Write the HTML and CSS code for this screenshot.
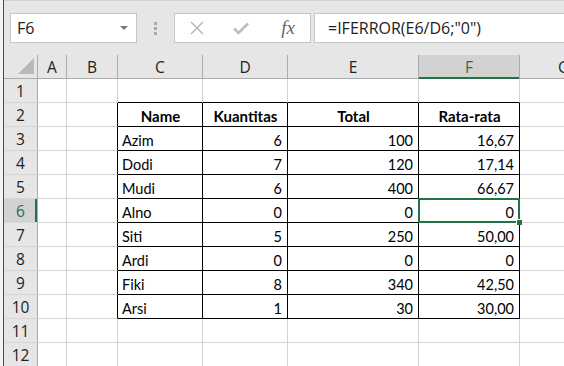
FILE: index.html
```html
<!DOCTYPE html>
<html lang="id">
<head>
    <meta charset="UTF-8">
    <meta name="viewport" content="width=device-width, initial-scale=1.0">
    <title>Rata-rata</title>
    <link rel="stylesheet" href="styles.css">
</head>
<body>
    <div class="app">
        <div class="topline"></div>

        <div class="formula-bar">
            <div class="namebox">
                <span>F6</span>
                <span class="caret"></span>
            </div>
            <div class="grip"><i></i><i></i><i></i></div>
            <div class="fx-buttons">
                <span class="btn">
                    <svg width="16" height="16" viewBox="0 0 16 16"><path d="M2 2 L14 14 M14 2 L2 14" stroke="#b4b4b4" stroke-width="1.4" fill="none"/></svg>
                </span>
                <span class="btn">
                    <svg width="18" height="16" viewBox="0 0 18 16"><path d="M2 8.5 L6.5 13 L16 3.5" stroke="#bdbdbd" stroke-width="2.6" fill="none"/></svg>
                </span>
                <span class="btn fx">fx</span>
            </div>
            <div class="formula">=IFERROR(E6/D6;"0")</div>
        </div>

        <div class="sheet">
            <!-- column headers -->
            <div class="ch corner"><span class="tri"></span></div>
            <div class="ch">A</div>
            <div class="ch">B</div>
            <div class="ch">C</div>
            <div class="ch">D</div>
            <div class="ch">E</div>
            <div class="ch active">F</div>
            <div class="ch last">G</div>

            <!-- row 1 -->
            <div class="rh">1</div>
            <div class="cell"></div><div class="cell"></div>
            <div class="cell eb"></div><div class="cell eb"></div><div class="cell eb"></div><div class="cell eb"></div>
            <div class="cell"></div>

            <!-- row 2 -->
            <div class="rh">2</div>
            <div class="cell"></div><div class="cell er"></div>
            <div class="cell tb th">Name</div>
            <div class="cell tb th">Kuantitas</div>
            <div class="cell tb th">Total</div>
            <div class="cell tb th">Rata-rata</div>
            <div class="cell"></div>

            <!-- row 3 -->
            <div class="rh">3</div>
            <div class="cell"></div><div class="cell er"></div>
            <div class="cell tb">Azim</div>
            <div class="cell tb num">6</div>
            <div class="cell tb num">100</div>
            <div class="cell tb num">16,67</div>
            <div class="cell"></div>

            <!-- row 4 -->
            <div class="rh">4</div>
            <div class="cell"></div><div class="cell er"></div>
            <div class="cell tb">Dodi</div>
            <div class="cell tb num">7</div>
            <div class="cell tb num">120</div>
            <div class="cell tb num">17,14</div>
            <div class="cell"></div>

            <!-- row 5 -->
            <div class="rh">5</div>
            <div class="cell"></div><div class="cell er"></div>
            <div class="cell tb">Mudi</div>
            <div class="cell tb num">6</div>
            <div class="cell tb num">400</div>
            <div class="cell tb num">66,67</div>
            <div class="cell"></div>

            <!-- row 6 -->
            <div class="rh active">6</div>
            <div class="cell"></div><div class="cell er"></div>
            <div class="cell tb">Alno</div>
            <div class="cell tb num">0</div>
            <div class="cell tb num">0</div>
            <div class="cell tb num selected">0</div>
            <div class="cell"></div>

            <!-- row 7 -->
            <div class="rh">7</div>
            <div class="cell"></div><div class="cell er"></div>
            <div class="cell tb">Siti</div>
            <div class="cell tb num">5</div>
            <div class="cell tb num">250</div>
            <div class="cell tb num">50,00</div>
            <div class="cell"></div>

            <!-- row 8 -->
            <div class="rh">8</div>
            <div class="cell"></div><div class="cell er"></div>
            <div class="cell tb">Ardi</div>
            <div class="cell tb num">0</div>
            <div class="cell tb num">0</div>
            <div class="cell tb num">0</div>
            <div class="cell"></div>

            <!-- row 9 -->
            <div class="rh">9</div>
            <div class="cell"></div><div class="cell er"></div>
            <div class="cell tb">Fiki</div>
            <div class="cell tb num">8</div>
            <div class="cell tb num">340</div>
            <div class="cell tb num">42,50</div>
            <div class="cell"></div>

            <!-- row 10 -->
            <div class="rh">10</div>
            <div class="cell"></div><div class="cell er"></div>
            <div class="cell tb">Arsi</div>
            <div class="cell tb num">1</div>
            <div class="cell tb num">30</div>
            <div class="cell tb num">30,00</div>
            <div class="cell"></div>

            <!-- row 11 -->
            <div class="rh">11</div>
            <div class="cell"></div><div class="cell"></div>
            <div class="cell"></div><div class="cell"></div><div class="cell"></div><div class="cell"></div>
            <div class="cell"></div>

            <!-- row 12 -->
            <div class="rh">12</div>
            <div class="cell"></div><div class="cell"></div>
            <div class="cell"></div><div class="cell"></div><div class="cell"></div><div class="cell"></div>
            <div class="cell"></div>
        </div>
    </div>
</body>
</html>
```

FILE: styles.css
```css
body {
    margin: 0;
    background: #f4f4f4;
    overflow: hidden;
}

.app {
    display: flex;
    flex-direction: column;
    height: 366px;
    margin-left: 3px;
    border-left: 1px solid #2b5b3d;
    background: #e6e6e6;
    overflow: hidden;
}

.topline {
    height: 3px;
    background: #f1f1f1;
    border-bottom: 1px solid #d4d4d4;
}

/* formula bar */

.formula-bar {
    display: flex;
    align-items: center;
    padding: 12px 0 12px 6px;
    font-family: "Open Sans", sans-serif;
    font-size: 16px;
    color: #222;
}

.namebox {
    width: 127px;
    height: 30px;
    box-sizing: border-box;
    display: flex;
    align-items: center;
    justify-content: space-between;
    padding: 0 8px 0 6px;
    background: #fff;
    border: 1px solid #c6c6c6;
}

.caret {
    width: 0;
    height: 0;
    border-left: 4px solid transparent;
    border-right: 4px solid transparent;
    border-top: 4px solid #7a7a7a;
}

.grip {
    width: 37px;
    display: flex;
    flex-direction: column;
    align-items: center;
    gap: 2px;
}

.grip i {
    width: 3px;
    height: 3px;
    background: #a9a9a9;
}

.fx-buttons {
    width: 137px;
    height: 30px;
    box-sizing: border-box;
    display: flex;
    align-items: center;
    background: #fff;
    border: 1px solid #c6c6c6;
}

.btn {
    width: 44px;
    display: flex;
    justify-content: center;
}

.fx {
    font-family: "Liberation Serif", serif;
    font-style: italic;
    font-size: 19px;
    color: #666;
    padding-left: 4px;
}

.formula {
    flex: 1;
    height: 30px;
    box-sizing: border-box;
    display: flex;
    align-items: center;
    margin-left: 3px;
    padding-left: 13px;
    background: #fff;
    border: 1px solid #c6c6c6;
    border-right: none;
    white-space: nowrap;
}

/* sheet grid */

.sheet {
    display: grid;
    grid-template-columns: 34px 29px 51px 85px 85px 131px 101px 90px;
    grid-auto-rows: 24px;
    background: #fff;
}

.ch,
.rh {
    box-sizing: border-box;
    display: flex;
    align-items: center;
    justify-content: center;
    background: #e6e6e6;
    font-family: "Open Sans", sans-serif;
    font-size: 15.5px;
    color: #222;
}

.ch {
    border-right: 1px solid #ababab;
    border-bottom: 1px solid #ababab;
}

.ch.last {
    justify-content: flex-start;
    padding-left: 38px;
}

.rh {
    border-right: 1px solid #ababab;
    border-bottom: 1px solid #d6d6d6;
}

.ch.active {
    background: #d2d2d2;
    color: #217346;
    box-shadow: inset 0 -2px 0 #217346;
    border-bottom: none;
}

.rh.active {
    background: #d2d2d2;
    color: #217346;
    box-shadow: inset -2px 0 0 #217346;
}

.corner {
    justify-content: flex-end;
    align-items: flex-end;
    padding: 0 3px 4px 0;
}

.tri {
    width: 16px;
    height: 16px;
    background: #b9b9b9;
    clip-path: polygon(100% 0, 100% 100%, 0 100%);
}

.cell {
    box-sizing: border-box;
    display: flex;
    align-items: flex-end;
    padding: 0 3px 1px 4px;
    border-right: 1px solid #d4d4d4;
    border-bottom: 1px solid #d4d4d4;
    font-family: Lato, sans-serif;
    font-size: 14.5px;
    color: #000;
    white-space: nowrap;
}

.cell.tb {
    border-right-color: #000;
    border-bottom-color: #000;
}

.cell.er {
    border-right-color: #000;
}

.cell.eb {
    border-bottom-color: #000;
}

.cell.th {
    justify-content: center;
    font-weight: bold;
    font-size: 15px;
}

.cell.num {
    justify-content: flex-end;
    padding-right: 5px;
}

.cell.selected {
    position: relative;
    z-index: 1;
}

.cell.selected::before {
    content: '';
    position: absolute;
    top: -1px;
    left: -1px;
    right: -1px;
    bottom: -1px;
    border: 2px solid #217346;
}

.cell.selected::after {
    content: '';
    position: absolute;
    right: -3px;
    bottom: -3px;
    width: 5px;
    height: 5px;
    background: #217346;
    border: 1px solid #fff;
    border-width: 1px 0 0 1px;
}
```
